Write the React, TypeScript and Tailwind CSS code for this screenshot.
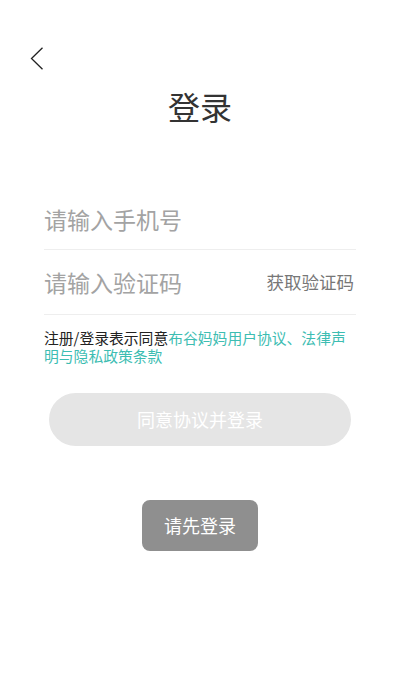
import type { FC } from "react";

const cjk = { fontFamily: '"Noto Sans CJK SC", "Noto Sans", sans-serif' };

const App: FC = () => {
  return (
    <div className="w-[400px] h-[690px] bg-white text-[#333]" style={cjk}>
      <div className="pt-[47px] pl-[30px] h-[70px]">
        <svg width="14" height="23" viewBox="0 0 14 23" fill="none">
          <path d="M12.5 0.8 L1.5 11.5 L12.5 22.2" stroke="#222" strokeWidth="1.3" />
        </svg>
      </div>

      <h1 className="text-center text-[32px] leading-[40px] mt-[16px] text-[#333]">登录</h1>

      <div className="px-[44px] mt-[64px]">
        <div className="h-[60px] flex items-center border-b border-[#eeeeee]">
          <input
            className="w-full outline-none text-[23px] placeholder:text-[#a3a3a3] bg-transparent"
            placeholder="请输入手机号"
          />
        </div>
        <div className="h-[65px] flex items-center border-b border-[#eeeeee]">
          <input
            className="flex-1 min-w-0 outline-none text-[23px] placeholder:text-[#a3a3a3] bg-transparent"
            placeholder="请输入验证码"
          />
          <button className="text-[17.5px] text-[#777] shrink-0 mr-[2px]">获取验证码</button>
        </div>

        <p className="mt-[14px] text-[14.8px] leading-[18px] text-[#222]">
          注册/登录表示同意<span className="text-[#3dbdb2]">布谷妈妈用户协议、法律声明与隐私政策条款</span>
        </p>
      </div>

      <div className="px-[49px] mt-[28px]">
        <button className="w-full h-[53px] rounded-full bg-[#e5e5e5] text-white text-[18px]">
          同意协议并登录
        </button>
      </div>

      <div className="flex justify-center mt-[54px]">
        <button className="w-[116px] h-[51px] rounded-[8px] bg-[#8f8f8f] text-white text-[18px]">
          请先登录
        </button>
      </div>
    </div>
  );
};

export default App;
